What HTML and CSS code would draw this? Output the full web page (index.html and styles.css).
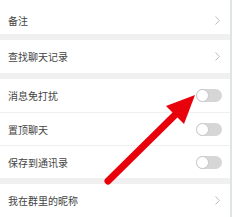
FILE: index.html
```html
<!DOCTYPE html>
<html lang="zh">
<head>
<meta charset="utf-8">
<link rel="stylesheet" href="styles.css">
</head>
<body>
<div class="page">
  <div class="group">
    <div class="row first"><span class="label">备注</span><svg class="chev" width="5" height="9" viewBox="0 0 5 9"><path d="M0.5 0.5 L4.3 4.5 L0.5 8.5" fill="none" stroke="#bdbdbd" stroke-width="1"/></svg></div>
  </div>
  <div class="gap"></div>
  <div class="group">
    <div class="row"><span class="label">查找聊天记录</span><svg class="chev" width="5" height="9" viewBox="0 0 5 9"><path d="M0.5 0.5 L4.3 4.5 L0.5 8.5" fill="none" stroke="#bdbdbd" stroke-width="1"/></svg></div>
  </div>
  <div class="gap"></div>
  <div class="group">
    <div class="row"><span class="label">消息免打扰</span><span class="toggle"><span class="knob"></span></span></div>
    <div class="row"><span class="label">置顶聊天</span><span class="toggle"><span class="knob"></span></span></div>
    <div class="row"><span class="label">保存到通讯录</span><span class="toggle"><span class="knob"></span></span></div>
  </div>
  <div class="gap"></div>
  <div class="group">
    <div class="row"><span class="label">我在群里的昵称</span><svg class="chev" width="5" height="9" viewBox="0 0 5 9"><path d="M0.5 0.5 L4.3 4.5 L0.5 8.5" fill="none" stroke="#bdbdbd" stroke-width="1"/></svg></div>
  </div>
  <svg class="arrow" width="233" height="217" viewBox="0 0 233 217">
    <line x1="108" y1="181" x2="178" y2="112" stroke="#e8000b" stroke-width="7" stroke-linecap="round"/>
    <polygon points="195,95 184,124 175,115 166,106" fill="#e8000b"/>
  </svg>
</div>
</body>
</html>
```
FILE: styles.css
```css
* { box-sizing: border-box; }
html, body { margin: 0; padding: 0; background: #fff; }
body { font-family: "Noto Sans CJK SC", "Noto Sans", sans-serif; }
.page {
  position: relative;
  width: 232px;
  height: 217px;
  overflow: hidden;
  border-right: 2px solid #dfe5e1;
  background: #fff;
}
.group { background: #fff; }
.row {
  height: 33px;
  display: flex;
  align-items: center;
  justify-content: space-between;
  padding: 0 9px 0 8px;
  border-top: 1px solid #efefef;
}
.row:first-child { border-top: none; }
.row.first { height: 34px; padding-top: 6px; }
.label {
  font-size: 10px;
  color: #444;
}
.gap { height: 6px; background: #f0f0f0; }
.chev { display: block; margin-right: 1px; }
.toggle {
  width: 26px;
  height: 13px;
  border-radius: 7px;
  background: #d6d6d6;
  display: flex;
  align-items: center;
  margin-right: -1px;
}
.knob {
  width: 13px;
  height: 13px;
  border-radius: 50%;
  background: #fff;
  border: 1px solid #c8c8c8;
}
.arrow { position: absolute; left: 0; top: 0; }
```
